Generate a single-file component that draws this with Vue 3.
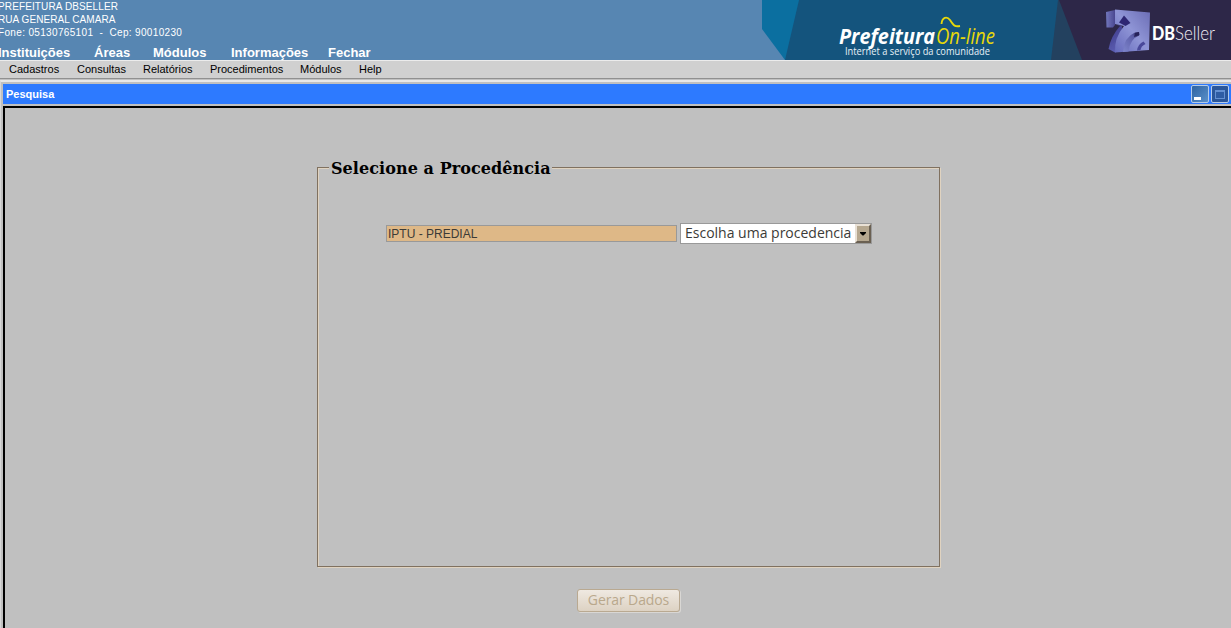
<script setup>
const areas = [
  { label: 'Instituições', width: 96 },
  { label: 'Áreas', width: 59 },
  { label: 'Módulos', width: 78 },
  { label: 'Informações', width: 97 },
  { label: 'Fechar', width: 60 },
]
const menus = [
  { label: 'Cadastros', width: 68 },
  { label: 'Consultas', width: 66 },
  { label: 'Relatórios', width: 67 },
  { label: 'Procedimentos', width: 90 },
  { label: 'Módulos', width: 59 },
  { label: 'Help', width: 40 },
]
</script>

<template>
  <div class="page">
    <header class="header">
      <div class="info">
        <div class="address">
          <div class="a1">PREFEITURA DBSELLER</div>
          <div class="a2">RUA GENERAL CAMARA</div>
          <div class="a3">Fone: 05130765101&nbsp; -&nbsp; Cep: 90010230</div>
        </div>
        <nav class="areas">
          <span v-for="a in areas" :key="a.label" :style="{ width: a.width + 'px' }">{{ a.label }}</span>
        </nav>
      </div>
      <svg class="banner" width="469" height="60" viewBox="0 0 469 60">
        <defs>
          <linearGradient id="face" x1="0" y1="1" x2="1" y2="0">
            <stop offset="0" stop-color="#6468bb" />
            <stop offset=".5" stop-color="#8f95d6" />
            <stop offset="1" stop-color="#6a6cb4" />
          </linearGradient>
          <linearGradient id="side" x1="0" y1="0" x2="1" y2="0">
            <stop offset="0" stop-color="#7277bd" />
            <stop offset="1" stop-color="#4a4790" />
          </linearGradient>
          <linearGradient id="leg" x1="0" y1="0" x2=".3" y2="1">
            <stop offset="0" stop-color="#3b3684" />
            <stop offset="1" stop-color="#5a5cb0" />
          </linearGradient>
          <linearGradient id="slot" x1="1" y1="0" x2="0" y2="1">
            <stop offset="0" stop-color="#28235a" />
            <stop offset=".3" stop-color="#5c5ea9" />
            <stop offset="1" stop-color="#7e85cc" />
          </linearGradient>
          <filter id="soft" x="-10%" y="-10%" width="120%" height="120%">
            <feGaussianBlur stdDeviation=".6" />
          </filter>
        </defs>
        <path d="M0 0H40V60H23L0 29Z" fill="#0b6fa0" />
        <path d="M37 0H300V60H23Z" fill="#14547d" />
        <path d="M296 0H340V60H289Z" fill="#23415f" />
        <path d="M297 0H469V60H320Z" fill="#2d2748" />
        <text class="brand" x="77" y="43.500" textLength="96" lengthAdjust="spacingAndGlyphs">Prefeitura</text>
        <text class="online" x="174" y="43.500" textLength="59" lengthAdjust="spacingAndGlyphs">On-line</text>
        <path d="M179.500 24C180 17 185 16 188 20C192 26 193 27 198 26" fill="none" stroke="#e8d80a" stroke-width="1.900" />
        <text class="slogan" x="83" y="54.500" textLength="145" lengthAdjust="spacingAndGlyphs">Internet a serviço da comunidade</text>
        <g filter="url(#soft)">
          <path d="M353 24L358 26Q349 36 346.500 49L353 52.500L360 50V26Z" fill="url(#leg)" />
          <path d="M344 12L353 10V25L351 27.500H344.500Z" fill="url(#side)" />
          <path d="M353 9.500L388 12.500L387 50L353 52.500Q352 38 362 26L353 24Z" fill="url(#face)" />
          <path d="M362 15.500L368.500 23L363.500 26L357 22.500Z" fill="#2f2873" />
          <path d="M361 52Q362 37 373 32.500L377 32L377 35.500Q368 39 366.500 51.500Z" fill="url(#slot)" />
          <path d="M373 33L377 32L377.500 35L372 37Z" fill="#28235a" />
          <path d="M375 50.500Q376 44 381.500 41.500L383.500 44Q379 46 378.500 50Z" fill="#4a489a" />
        </g>
        <text class="db" x="390" y="40" textLength="23" lengthAdjust="spacingAndGlyphs">DB</text>
        <text class="seller" x="413" y="40" textLength="40" lengthAdjust="spacingAndGlyphs">Seller</text>
      </svg>
    </header>

    <nav class="menubar">
      <span v-for="m in menus" :key="m.label" :style="{ width: m.width + 'px' }">{{ m.label }}</span>
    </nav>

    <section class="window">
      <div class="titlebar">
        <span class="title">Pesquisa</span>
        <div class="buttons">
          <svg width="18" height="18" viewBox="0 0 18 18">
            <defs>
              <linearGradient id="min" x1="0" y1="0" x2="1" y2="1">
                <stop offset="0" stop-color="#2d62a0" />
                <stop offset="1" stop-color="#5c92cc" />
              </linearGradient>
            </defs>
            <rect x=".5" y=".5" width="17" height="17" rx="1.500" fill="url(#min)" stroke="#b5cce8" />
            <rect x="3" y="12" width="7" height="3" fill="#fff" />
          </svg>
          <svg width="18" height="18" viewBox="0 0 18 18">
            <rect x=".5" y=".5" width="17" height="17" rx="1.500" fill="#2a569a" stroke="#b5cce8" />
            <rect x="4.500" y="5.500" width="9" height="8" fill="#2e5ca4" stroke="#6490d2" />
            <path d="M4 6H14" stroke="#6490d2" stroke-width="2" />
          </svg>
        </div>
      </div>
      <main class="content">
        <fieldset class="box">
          <legend>Selecione a Procedência</legend>
          <div class="row">
            <div class="field">IPTU - PREDIAL</div>
            <div class="select">
              <span>Escolha uma procedencia</span>
              <div class="arrow">
                <svg width="6" height="4" viewBox="0 0 6 4"><path d="M0 0H6V1L3.500 3.500H2.500L0 1Z" fill="#000" /></svg>
              </div>
            </div>
          </div>
        </fieldset>
        <button class="generate" disabled>Gerar Dados</button>
      </main>
    </section>
  </div>
</template>

<style>
body {
  margin: 0;
  overflow: hidden;
  background: #c0c0c0;
}
</style>

<style scoped>
.page {
  width: 1231px;
  height: 628px;
  overflow: hidden;
  display: flex;
  flex-direction: column;
  background: #c0c0c0;
  font-family: "Liberation Sans", Arial, sans-serif;
}
.header {
  height: 60px;
  display: flex;
  justify-content: space-between;
  background: #5786b2;
  color: #fff;
  flex: none;
}
.info {
  margin-left: -2px;
  white-space: nowrap;
}
.address {
  font-size: 10px;
  line-height: 13px;
  height: 45px;
}
.a1 { letter-spacing: 0.12px; }
.a2 { letter-spacing: 0.06px; }
.a3 { letter-spacing: 0.34px; }
.areas {
  display: flex;
  font-size: 13px;
  font-weight: bold;
  line-height: 15px;
}
.areas span,
.menubar span {
  flex: none;
}
.banner {
  flex: none;
  display: block;
}
.brand {
  font: italic bold 21.5px "Open Sans", sans-serif;
  fill: #fff;
}
.online {
  font: italic 22px "Open Sans", sans-serif;
  fill: #e8d80a;
}
.slogan {
  font: 10px "Open Sans", sans-serif;
  fill: #e8f1f7;
}
.db {
  font: 900 18.5px Lato, sans-serif;
  fill: #fff;
}
.seller {
  font: 300 19px Lato, sans-serif;
  fill: #f0eef5;
}
.menubar {
  box-sizing: border-box;
  height: 19px;
  flex: none;
  display: flex;
  padding-left: 9px;
  background: #d0d0d0;
  border-top: 1px solid #ececec;
  border-bottom: 1px solid #909090;
  font-size: 11px;
  line-height: 17px;
  color: #000;
}
.window {
  flex: 1;
  display: flex;
  flex-direction: column;
  margin-top: 1px;
  border-top: 2px solid #e8e8e8;
  border-left: 1px solid #d8d8d8;
  padding: 2px 0 0 2px;
}
.titlebar {
  height: 20px;
  flex: none;
  display: flex;
  align-items: center;
  justify-content: space-between;
  background: #2d7aff;
  padding: 0 2px 0 3px;
}
.title {
  font-size: 11px;
  font-weight: bold;
  color: #fff;
}
.buttons {
  display: flex;
  gap: 2px;
}
.buttons svg {
  display: block;
}
.content {
  flex: 1;
  margin-top: 2px;
  border-top: 2px solid #000;
  border-left: 2px solid #000;
  display: flex;
  flex-direction: column;
  align-items: flex-start;
}
.box {
  box-sizing: border-box;
  width: 623px;
  height: 409px;
  margin: 50px 0 0 312px;
  padding: 0 0 0 11px;
  border: 1px solid #807160;
  box-shadow: 1px 1px 0 #e0d3c0, inset 1px 1px 0 #e0d3c0;
}
legend {
  padding: 2px 1px 0 2px;
  background: #c0c0c0;
  font: bold 16px/17px "DejaVu Serif", serif;
  letter-spacing: 0.07px;
  color: #000;
}
.row {
  display: flex;
  align-items: center;
  gap: 3px;
  margin: 46px 0 0 57px;
}
.field {
  box-sizing: border-box;
  width: 291px;
  height: 17px;
  border: 1px solid #999;
  background: #deb887;
  padding-left: 1px;
  font-size: 12px;
  line-height: 16px;
  color: #3c3b37;
}
.select {
  box-sizing: border-box;
  width: 192px;
  height: 21px;
  border: 1px solid #999;
  background: #fff;
  display: flex;
  justify-content: space-between;
  padding-left: 4px;
  font: 14px/17px "Open Sans", sans-serif;
  color: #3c3b37;
  white-space: nowrap;
}
.arrow {
  box-sizing: border-box;
  width: 16px;
  height: 19px;
  border: 2px solid;
  border-color: #e8e0d5 #6a6052 #6a6052 #e8e0d5;
  background: #b5a78f;
  display: flex;
  align-items: center;
  justify-content: center;
  flex: none;
}
.generate {
  box-sizing: border-box;
  width: 103px;
  height: 23px;
  margin: 22px 0 0 572px;
  padding: 0 0 2px;
  border: 1px solid #b9a991;
  border-radius: 3px;
  background: linear-gradient(#efe9e1, #ddd2c3);
  box-shadow: 1px 1px 0 #d9d7d4;
  font: 14px/19px "Open Sans", sans-serif;
  letter-spacing: -0.1px;
  color: #b9a88c;
}
</style>
